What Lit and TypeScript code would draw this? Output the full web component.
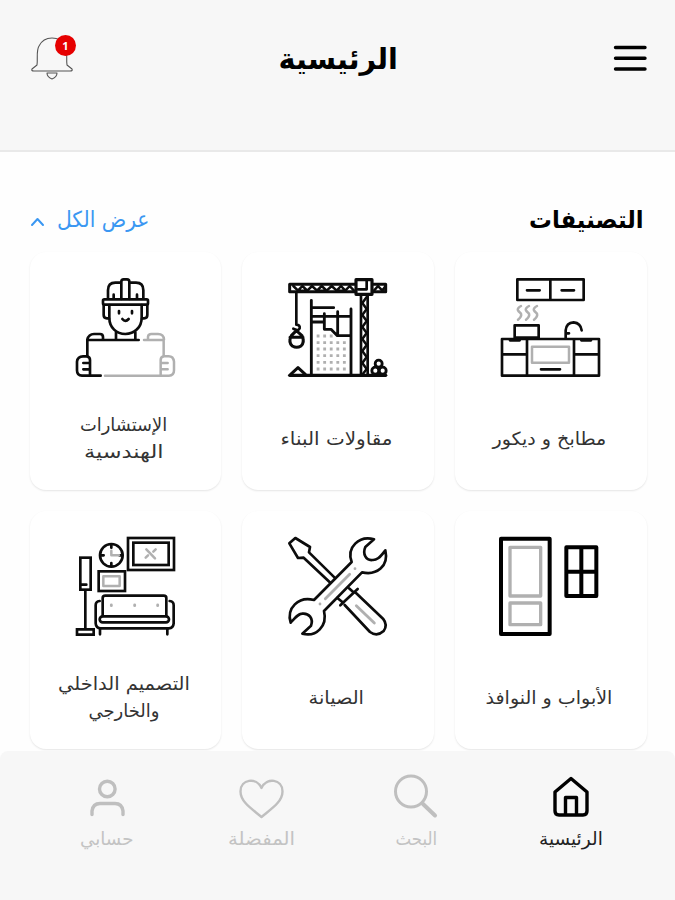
import { LitElement, html, css, svg } from "lit";
import { customElement, property } from "lit/decorators.js";

const worker = svg`
  <g class="k">
    <path d="M264 174V150Q264 127 286 127H300M332 127H348Q370 127 370 150V174"/>
    <path d="M304 176V124Q304 117 311 117H321Q328 117 328 124V176"/>
    <path d="M281 163V174M351 163V174"/>
    <rect x="249" y="177" width="135" height="16" rx="4"/>
    <path d="M268 194V232C268 262 290 281 316 281S365 262 365 232V194"/>
    <path d="M251 194V224Q251 234 261 234H267M382 194V224Q382 234 372 234H366"/>
    <path d="M297 212V219M336 212V219M307 236Q316 247 326 236"/>
    <path d="M288 276V299M346 276V299M202 299H356"/>
    <path d="M202 347V298Q206 281 222 281H240Q249 281 249 290V298"/>
    <path d="M242 406H186Q171 406 171 390V364Q173 348 189 348H200Q210 349 210 359V405M190 368H208M190 387H208"/>
  </g>
  <g class="g">
    <path d="M372 299H431V347M384 297V289Q385 281 394 281H414Q431 281 432 298"/>
    <path d="M255 406H447Q462 406 462 390V364Q460 348 446 348H432Q422 349 422 359V405M424 368H443M424 387H443"/>
  </g>`;

const crane = svg`
  <g class="k">
    <path d="M361 132H165V154H361M416 132H453V154H416" stroke-width="9"/>
    <path d="M176 137L190 151H218L232 137L247 151H276L291 137L306 151H332L345 137L358 151M190 151L203 137L218 151M247 151L261 137L276 151M306 151L319 137L332 151M418 151L430 137L443 151L452 138" stroke-width="7.500"/>
    <rect x="364" y="118" width="48" height="44" stroke-width="9.500"/>
    <path d="M396 122V147H370" stroke-width="8"/>
    <path d="M379 164V404M399 164V404" stroke-width="8"/>
    <path d="M396 170L383 188L396 206L383 224L396 242L383 260L396 278L383 296L396 314L383 332L396 350L383 368L396 386L384 402" stroke-width="7.500"/>
    <path d="M185 158V253Q197 254 195 264Q190 272 184 268L176 265"/>
    <path d="M185 271L170 286Q160 306 173 317Q186 325 199 317Q211 306 202 286ZM166 291H205" stroke-width="9"/>
    <path d="M230 180V405M349 206V405M233 202H297M233 228H347M233 245H268M269 220V267H289L308 286H347M309 214V284" stroke-width="8.500"/>
    <path d="M165 405H453" stroke-width="10"/>
    <path d="M168 402L190 382L212 402" stroke-width="9"/>
    <circle cx="432" cy="370" r="10.500" stroke-width="8.500"/>
    <circle cx="422" cy="391" r="10.500" stroke-width="8.500"/>
    <circle cx="444" cy="391" r="10.500" stroke-width="8.500"/>
  </g>
  <g class="g dots">
    <path d="M250 287H301M250 307H340M250 326H340M250 346H340M250 366H340M250 386H340"/>
  </g>`;

const kitchen = svg`
  <g class="k">
    <rect x="217" y="117" width="199" height="62"/>
    <path d="M316 118V178M246 150H284M350 150H387"/>
    <path d="M209 255H281V292H209Z"/>
    <path d="M362 294V270Q364 247 386 246Q407 248 410 270M363 279H372"/>
    <rect x="171" y="296" width="291" height="110"/>
    <path d="M246 297V405M387 297V405M172 342H245M388 342H461M195 300H224M409 300H438M288 387H345"/>
  </g>
  <g class="g">
    <path d="M228 197Q214 205 220 212L228 220Q231 229 219 238M252 197Q238 205 244 212L252 220Q255 229 243 238M276 197Q262 205 268 212L276 220Q279 229 267 238"/>
    <rect x="261" y="319" width="111" height="48"/>
  </g>`;

const furniture = svg`
  <g class="k sharp">
    <rect x="324" y="114" width="138" height="96"/>
    <rect x="340" y="128" width="106" height="67"/>
    <circle cx="274" cy="166" r="34"/>
    <path d="M274 134V143M274 189V198M242 166H251M298 166H307"/>
    <rect x="236" y="214" width="79" height="59"/>
    <rect x="181" y="173" width="31" height="96"/>
    <path d="M184 254H199M196 272V386M171 388H221V404H171Z"/>
    <path d="M248 348V294Q248 287 256 287H431Q439 287 439 294V348"/>
    <rect x="239" y="349" width="208" height="18" rx="9"/>
    <path d="M239 303Q227 304 227 316V370Q228 384 242 385H446Q460 384 461 370V316Q461 304 449 303M240 388V403M442 388V403"/>
  </g>
  <g class="g">
    <path d="M274 152V166H297M379 148L405 175M377 173L384 166M400 155L407 148" />
    <rect x="250" y="229" width="49" height="29"/>
    <path d="M274 315V317M344 315V317M413 315V317" stroke-width="8.500"/>
  </g>`;

const tools = svg`
  <g class="k">
    <path d="M287 248L207 173L190 174L164 130L182 114L226 141L223 157L300 233"/>
    <path d="M351 186C335 142 373 106 418 118L392 141C383 162 394 182 413 180C425 181 434 175 452 151C463 199 426 227 382 217L268 333C279 378 245 412 203 401L229 377C237 356 223 338 202 341C190 342 184 350 168 368C155 324 191 288 238 300Z"/>
    <path d="M343 265L358 278M308 294L323 306M369 267L317 316M364 279L445 356Q460 375 447 393Q427 411 406 396L330 315"/>
  </g>
  <g class="g"><path d="M345 223L272 296M365 317L419 369M256 312V312.1M361 206V206.1" stroke-width="8.500"/></g>`;

const doors = svg`
  <g class="k heavy">
    <rect x="168" y="116" width="146" height="286"/>
    <path d="M364 142H454V288H364ZM409 142V288M364 215H454"/>
  </g>
  <g class="g heavy">
    <rect x="195" y="142" width="92" height="146"/>
    <rect x="195" y="309" width="92" height="65"/>
  </g>`;

interface Category { lines: { t: string; w: number }[]; icon: unknown; box: string }
const categories: Category[] = [
  { lines: [{ t: "مطابخ و ديكور", w: 114 }], icon: kitchen, box: "168 110 300 300" },
  { lines: [{ t: "مقاولات البناء", w: 112 }], icon: crane, box: "160 110 300 300" },
  { lines: [{ t: "الإستشارات", w: 87 }, { t: "الهندسية", w: 79 }], icon: worker, box: "165 110 300 300" },
  { lines: [{ t: "الأبواب و النوافذ", w: 127 }], icon: doors, box: "168 108 300 300" },
  { lines: [{ t: "الصيانة", w: 56 }], icon: tools, box: "160 108 300 300" },
  { lines: [{ t: "التصميم الداخلي", w: 132 }, { t: "والخارجي", w: 71 }], icon: furniture, box: "165 108 300 300" },
];

const tabs = [
  { t: "الرئيسية", w: 64, on: true, icon: svg`<path stroke-width="3.4" d="M7 17L23 3.500L39 17V36Q39 40 35 40H11Q7 40 7 36ZM17.500 39V22.500H28.500V39"/>` },
  { t: "البحث", w: 42, on: false, icon: svg`<circle cx="18" cy="16.500" r="15.500" stroke-width="3"/><path stroke-width="4" d="M29.500 28.500L42 40.500"/>` },
  { t: "المفضلة", w: 67, on: false, icon: svg`<path stroke-width="2.400" d="M23.500 42C14 34 2.500 27 2.500 16.500C2.500 4 18.500 2 23.500 13C28.500 2 44.500 4 44.500 16.500C44.500 27 33 34 23.500 42Z"/>` },
  { t: "حسابي", w: 53, on: false, icon: svg`<circle cx="24.300" cy="14" r="7.800" stroke-width="3.400"/><path stroke-width="3.400" d="M9 39.500V36Q10 28.500 17 28.500H32Q39 28.500 40 36V39.500"/>` },
];

/* A single line of Arabic text whose glyphs are stretched to a set measure. */
@customElement("fit-text")
class FitText extends LitElement {
  @property() text = "";
  @property({ type: Number }) measure = 0;
  static styles = css`
    :host { display: flex; justify-content: center; }
    span { display: block; white-space: nowrap; flex: none; transform-origin: center; }
  `;
  render() {
    return html`<span dir="rtl">${this.text}</span>`;
  }
  updated() {
    const span = this.renderRoot.querySelector("span")!;
    this.style.width = this.measure + "px";
    span.style.transform = `scaleX(${this.measure / (span.offsetWidth || this.measure)})`;
  }
}

@customElement("app-root")
class AppRoot extends LitElement {
  static styles = css`
    :host {
      display: flex; flex-direction: column; height: 900px; overflow: hidden;
      background: #fefefe; color: #000; direction: rtl;
      font-family: "DejaVu Sans Condensed", "DejaVu Sans", sans-serif;
    }
    * { box-sizing: border-box; }
    svg { display: block; fill: none; stroke-linecap: round; stroke-linejoin: round; overflow: visible; }
    header {
      height: 152px; flex: none; background: #f7f7f7; border-bottom: 2px solid #e9e9e9;
      padding: 34px 28px 0 30px; display: flex; justify-content: space-between; align-items: flex-start;
    }
    .side { width: 47px; height: 48px; position: relative; }
    .menu { stroke: #000; stroke-width: 3.4; }
    .bell { stroke: #555; stroke-width: 1.1; }
    .badge {
      position: absolute; left: 25px; top: 1px; width: 21px; height: 21px; border-radius: 50%;
      background: #e60000; color: #fff; font: bold 11px/21px "Open Sans", sans-serif; text-align: center;
    }
    .title { font-size: 29px; font-weight: 700; line-height: 50px; margin-right: 1px; }
    .head { height: 100px; flex: none; padding: 47px 31px 0 30px; display: flex; justify-content: space-between; }
    .head .name { font-size: 24px; font-weight: 700; line-height: 42px; }
    .all { display: flex; gap: 12px; align-items: center; height: 42px; color: #3a97f2; font-size: 22px; line-height: 42px; }
    .chev { stroke: #3a97f2; stroke-width: 2; margin-top: 4px; }
    .grid { display: grid; grid-template-columns: repeat(3, 1fr); grid-auto-rows: 238px; gap: 21px; padding: 0 28.5px 0 29.5px; flex: none; height: 498px; }
    .card {
      background: #fff; border-radius: 16px; box-shadow: 0 1px 2px rgba(0,0,0,.1);
      display: flex; flex-direction: column; align-items: center; padding-top: 25px;
    }
    .k { stroke: #0c0c0c; stroke-width: 8; }
    .g { stroke: #b0b0b0; stroke-width: 7.500; }
    .sharp { stroke-linejoin: miter; }
    .k.heavy { stroke: #000; stroke-width: 12; }
    .g.heavy { stroke-width: 10; }
    .dots { stroke-width: 8.500; stroke-linecap: butt; stroke-dasharray: 8.500 11.200; transform: translateX(-4px); }
    .label { height: 74px; margin-top: 24px; margin-right: 3px; display: flex; flex-direction: column; justify-content: center; align-items: center; font-size: 18px; line-height: 27px; color: #333; }
    nav {
      flex: 1; background: #f7f7f7; border-radius: 8px 8px 0 0; padding: 24px 27px 0 29px;
      display: grid; grid-template-columns: repeat(4, 1fr); z-index: 1; margin-top: 1px;
    }
    .tab { display: flex; flex-direction: column; align-items: center; color: #c3c3c3; font-size: 18px; line-height: 28px; gap: 7px; }
    .tab svg { stroke: #bfbfbf; }
    .tab.on { color: #222; }
    .tab.on svg { stroke: #000; }
  `;

  render() {
    return html`
      <header>
        <div class="side"><svg class="menu" width="47" height="48"><path d="M15.500 13.500H45M15.500 24.300H45M15.500 35H45"/></svg></div>
        <fit-text class="title" text="الرئيسية" measure="119"></fit-text>
        <div class="side">
          <svg class="bell" width="47" height="48"><path d="M7 31C8 24 6 17 9 12C12 6 16 4 22 4C28 4 32 6 35 12C38 17 36 24 37 31L42 35Q43 37 40 37H4Q1 37 2 35ZM17 39H27Q27 43 22 45Q17 43 17 39Z"/></svg>
          <span class="badge">1</span>
        </div>
      </header>
      <div class="head">
        <fit-text class="name" text="التصنيفات" measure="115"></fit-text>
        <div class="all">
          <fit-text text="عرض الكل" measure="92"></fit-text>
          <svg class="chev" width="15" height="10"><path d="M2 8L7.500 2L13 8"/></svg>
        </div>
      </div>
      <div class="grid">
        ${categories.map((c) => html`
          <div class="card">
            <svg width="100" height="100" viewBox=${c.box}>${c.icon}</svg>
            <div class="label">${c.lines.map((l) => html`<fit-text text=${l.t} measure=${l.w}></fit-text>`)}</div>
          </div>`)}
      </div>
      <nav>
        ${tabs.map((t) => html`
          <div class="tab ${t.on ? "on" : ""}">
            <svg width="46" height="43">${t.icon}</svg>
            <fit-text text=${t.t} measure=${t.w}></fit-text>
          </div>`)}
      </nav>`;
  }
}
